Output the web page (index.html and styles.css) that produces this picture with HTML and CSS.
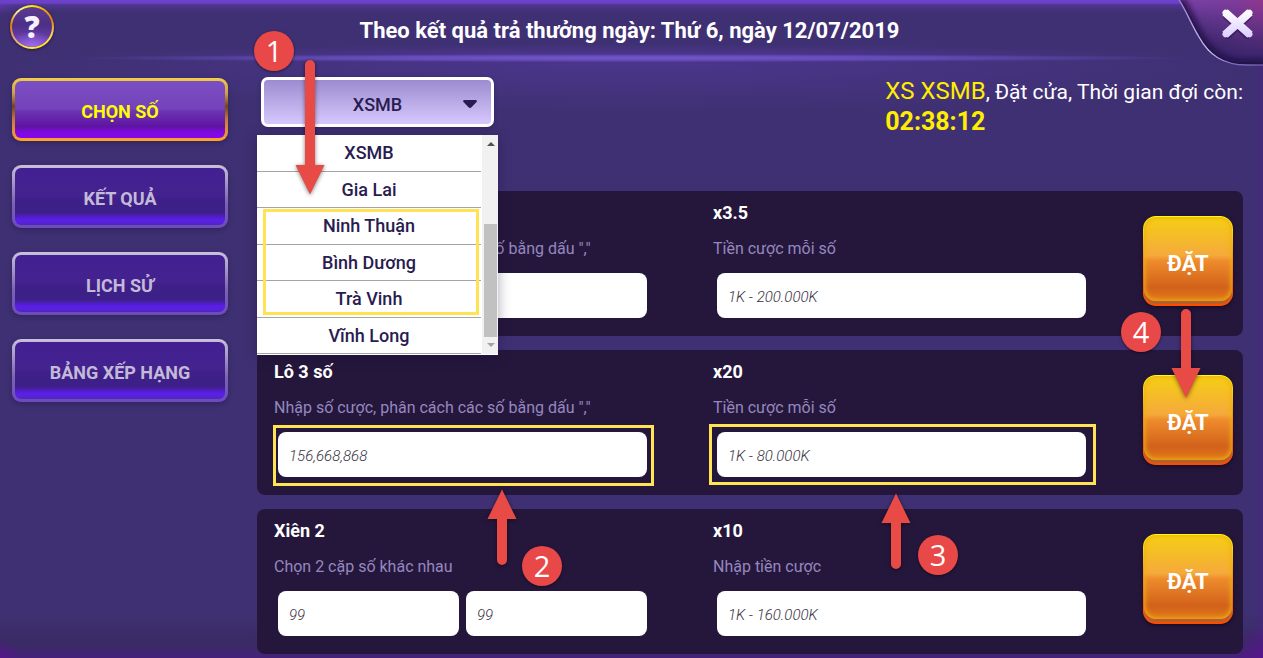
FILE: index.html
```html
<!DOCTYPE html>
<html lang="vi">
<head>
<meta charset="utf-8">
<meta name="viewport" content="width=device-width, initial-scale=1">
<title>XSMB</title>
<link rel="stylesheet" href="styles.css">
</head>
<body>
<div class="shell">
  <header class="header">
    <button class="help" type="button">?</button>
    <h1 class="title">Theo kết quả trả thưởng ngày: Thứ 6, ngày 12/07/2019</h1>
    <button class="close" type="button" aria-label="Đóng">
      <svg viewBox="0 0 86 68" width="86" height="68" aria-hidden="true">
        <defs>
          <linearGradient id="cornerFill" x1="0" y1="0" x2="0" y2="1">
            <stop offset="0" stop-color="#7c3fa4"/><stop offset=".3" stop-color="#5d3489"/><stop offset=".65" stop-color="#43286f"/><stop offset="1" stop-color="#35236b"/>
          </linearGradient>
          <radialGradient id="cornerGlow" cx="86" cy="0" r="60" gradientUnits="userSpaceOnUse">
            <stop offset="0" stop-color="#a02f80" stop-opacity=".6"/><stop offset="1" stop-color="#6a3a92" stop-opacity="0"/>
          </radialGradient>
          <linearGradient id="cornerLine" x1="0" y1="0" x2="1" y2="0">
            <stop offset="0" stop-color="#9d7ad0"/><stop offset=".35" stop-color="#d9c8ff"/><stop offset=".6" stop-color="#8a70c8"/><stop offset="1" stop-color="#6c56a6"/>
          </linearGradient>
          <linearGradient id="crossFill" x1="0" y1="10" x2="0" y2="38" gradientUnits="userSpaceOnUse">
            <stop offset="0" stop-color="#fff"/><stop offset="1" stop-color="#dccbff"/>
          </linearGradient>
          <filter id="inner"><feGaussianBlur stdDeviation="3"/></filter>
          <clipPath id="cornerClip"><path d="M2 0C8 8 14 24 22 37C32 55 46 65 70 65H86V0Z"/></clipPath>
        </defs>
        <g clip-path="url(#cornerClip)">
          <path d="M2 0C8 8 14 24 22 37C32 55 46 65 70 65H86V0Z" fill="url(#cornerFill)"/>
          <path d="M2 0C8 8 14 24 22 37C32 55 46 65 70 65H90V-10Z" fill="url(#cornerGlow)"/>
          <path d="M2 0C8 8 14 24 22 37C32 55 46 65 70 65H90" fill="none" stroke="#1d1040" stroke-width="9" filter="url(#inner)"/>
        </g>
        <path d="M2 0C8 8 14 24 22 37C32 55 46 65 70 65H86" fill="none" stroke="url(#cornerLine)" stroke-width="1.3"/>
        <path d="M50.500 16L70.500 34.500M70.500 16L50.500 34.500" stroke="#201144" stroke-opacity=".5" stroke-width="9" stroke-linecap="round"/>
        <path d="M48.500 12.700L72.500 34.300M72.500 12.700L48.500 34.300" stroke="url(#crossFill)" stroke-width="6" stroke-linecap="round"/>
        <path d="M51 15L70 32M70 15L51 32" stroke="url(#crossFill)" stroke-width="8" stroke-linecap="square"/>
      </svg>
    </button>
  </header>

  <div class="body">
    <nav class="nav">
      <button class="tab tab-active" type="button">CHỌN SỐ</button>
      <button class="tab" type="button">KẾT QUẢ</button>
      <button class="tab" type="button">LỊCH SỬ</button>
      <button class="tab" type="button">BẢNG XẾP HẠNG</button>
    </nav>

    <main class="main">
      <div class="toolbar">
        <div class="picker">
          <select class="select" aria-label="Đài xổ số"><option>XSMB</option></select>
          <svg class="caret" viewBox="0 0 14 8" width="14" height="8" aria-hidden="true"><path d="M1 0H13Q14.500 .5 13.500 2L8.500 7.300Q7 8.500 5.500 7.300L.5 2Q-.5 .5 1 0Z" fill="#291c50"/></svg>
          <div class="menu">
            <ul class="options">
              <li>XSMB</li><li>Gia Lai</li><li>Ninh Thuận</li><li>Bình Dương</li><li>Trà Vinh</li><li>Vĩnh Long</li>
            </ul>
            <div class="scroll">
              <svg viewBox="0 0 8 4" width="8" height="4" aria-hidden="true"><path d="M0 4L4 0L8 4Z" fill="#505050"/></svg>
              <div class="thumb"></div>
              <svg viewBox="0 0 8 4" width="8" height="4" aria-hidden="true"><path d="M0 0L4 4L8 0Z" fill="#a3a3a3"/></svg>
            </div>
            <div class="mark mark-menu"></div>
          </div>
          <svg class="arrow arrow-1" viewBox="0 0 30 135" width="30" height="135" aria-hidden="true"><path d="M10 5A5 5 0 0 1 20 5V105H29.500L15 134.500L.5 105H10Z"/></svg>
          <span class="step step-1">1</span>
        </div>
        <p class="status"><span class="channel">XS XSMB</span>, Đặt cửa, Thời gian đợi còn:<br><strong class="time">02:38:12</strong></p>
      </div>

      <div class="cards">
        <section class="card">
          <div class="bets">
            <div class="bet">
              <h2 class="name">Lô 2 số</h2>
              <label class="hint" for="n1">Nhập số cược, phân cách các số bằng dấu ","</label>
              <div class="fields"><input class="input" id="n1" type="text"></div>
            </div>
            <div class="bet">
              <h2 class="name">x3.5</h2>
              <label class="hint" for="m1">Tiền cược mỗi số</label>
              <div class="fields"><input class="input" id="m1" type="text" placeholder="1K - 200.000K"></div>
            </div>
          </div>
          <div class="action"><button class="place" type="button"><span>ĐẶT</span></button></div>
        </section>

        <section class="card">
          <div class="bets">
            <div class="bet">
              <h2 class="name">Lô 3 số</h2>
              <label class="hint" for="n2">Nhập số cược, phân cách các số bằng dấu ","</label>
              <div class="fields">
                <input class="input" id="n2" type="text" placeholder="156,668,868">
                <div class="mark mark-numbers"></div>
                <svg class="arrow arrow-2" viewBox="0 0 30 77" width="30" height="77" aria-hidden="true"><path d="M15 .5L29.500 30H20V71A5 5 0 0 1 10 71V30H.5Z"/></svg>
                <span class="step step-2">2</span>
              </div>
            </div>
            <div class="bet">
              <h2 class="name">x20</h2>
              <label class="hint" for="m2">Tiền cược mỗi số</label>
              <div class="fields">
                <input class="input" id="m2" type="text" placeholder="1K - 80.000K">
                <div class="mark mark-money"></div>
                <svg class="arrow arrow-3" viewBox="0 0 30 77" width="30" height="77" aria-hidden="true"><path d="M15 .5L29.500 30H20V71A5 5 0 0 1 10 71V30H.5Z"/></svg>
                <span class="step step-3">3</span>
              </div>
            </div>
          </div>
          <div class="action">
            <button class="place" type="button"><span>ĐẶT</span></button>
            <svg class="arrow arrow-4" viewBox="0 0 30 90" width="30" height="90" aria-hidden="true"><path d="M10 5A5 5 0 0 1 20 5V59H29.500L15 89L.5 59H10Z"/></svg>
            <span class="step step-4">4</span>
          </div>
        </section>

        <section class="card">
          <div class="bets">
            <div class="bet">
              <h2 class="name">Xiên 2</h2>
              <label class="hint" for="n3">Chọn 2 cặp số khác nhau</label>
              <div class="fields">
                <input class="input" id="n3" type="text" placeholder="99">
                <input class="input" type="text" placeholder="99" aria-label="Số thứ hai">
              </div>
            </div>
            <div class="bet">
              <h2 class="name">x10</h2>
              <label class="hint" for="m3">Nhập tiền cược</label>
              <div class="fields"><input class="input" id="m3" type="text" placeholder="1K - 160.000K"></div>
            </div>
          </div>
          <div class="action"><button class="place" type="button"><span>ĐẶT</span></button></div>
        </section>
      </div>
    </main>
  </div>
</div>
</body>
</html>
```
FILE: styles.css
```css
* { box-sizing: border-box; }

body {
  margin: 0;
  font-family: Roboto, "Noto Sans", sans-serif;
  color: #fff;
}

button, select, input { font-family: inherit; margin: 0; }
button { cursor: pointer; }

.shell {
  position: relative;
  min-height: 100vh;
  overflow: hidden;
  background:
    linear-gradient(#6e41cc 0, #6a40c6 3px, rgba(90, 58, 165, .6) 5px, rgba(68, 49, 120, 0) 12px),
    radial-gradient(circle at 0 0, rgba(110, 50, 190, .8), rgba(110, 50, 190, 0) 16px),
    radial-gradient(circle at 0 100%, rgba(86, 20, 140, .8), rgba(86, 20, 140, 0) 20px),
    radial-gradient(circle at 100% 100%, rgba(86, 20, 140, .95), rgba(86, 20, 140, 0) 34px),
    linear-gradient(to left, rgba(74, 34, 130, .5), rgba(74, 34, 130, 0) 10px),
    linear-gradient(to top, #46207c 0, #402670 6px, rgba(57, 42, 98, .9) 14px, rgba(63, 48, 115, 0) 46px),
    #3f3073;
}

/* Header */
.header {
  display: flex;
  align-items: center;
  justify-content: center;
  height: 62px;
  background:
    radial-gradient(ellipse 44% 4px at 50% 58px, #7457c8, rgba(104, 78, 190, .85) 55%, rgba(80, 56, 150, 0)),
    radial-gradient(ellipse 46% 16px at 50% 60px, rgba(84, 58, 160, .9), rgba(80, 56, 150, 0));
}

.title {
  margin: 0;
  padding-right: 4px;
  font-size: 22px;
  line-height: 30px;
  font-weight: 700;
}

.help {
  position: absolute;
  top: 5px;
  left: 10px;
  width: 44px;
  height: 44px;
  padding: 0;
  border: 2px solid transparent;
  border-radius: 50%;
  background:
    radial-gradient(ellipse 60% 40% at 50% 100%, #a06cf0, rgba(130, 80, 210, 0)) padding-box,
    linear-gradient(#5a3c8e, #4c2f86 45%, #7446bd) padding-box,
    conic-gradient(#ffe600, #e07a10 70deg, #ffd85a 110deg, #fff000 160deg, #ffee30 195deg, #e8a080 235deg, #e07a00 275deg, #fff8a0 320deg, #ffe600) border-box;
  box-shadow: 0 1px 3px rgba(20, 10, 50, .6);
  color: #f6f0ff;
  font-family: "Open Sans", sans-serif;
  font-size: 30px;
  line-height: 40px;
  font-weight: 800;
}

.close {
  position: absolute;
  top: 0;
  right: 0;
  padding: 0;
  border: 0;
  background: none;
}
.close svg { display: block; }

/* Layout */
.body {
  display: flex;
  gap: 29px;
  padding: 15px 20px 3px 12px;
  background: radial-gradient(ellipse 50% 50px at 50% 0, rgba(88, 60, 165, .5), rgba(63, 48, 115, 0));
}

.nav {
  display: flex;
  flex: none;
  flex-direction: column;
  gap: 24px;
  width: 216px;
  padding-top: 1px;
}

.tab {
  height: 63px;
  padding: 5px 0 0;
  border: 3px solid transparent;
  border-radius: 9px;
  background:
    linear-gradient(#432092, #44228f 48%, #3f2089 54%, #3d1f88 78%, #5a1fe6 90%, #5a20e6 95%, #4d2aa8) padding-box,
    linear-gradient(#c9c1dc, #7a64b0 60%, #6b4bbc) border-box;
  box-shadow: 0 2px 5px rgba(25, 15, 60, .35);
  color: #c3bad8;
  font-size: 18px;
  line-height: 24px;
  font-weight: 700;
}

.tab-active {
  background:
    linear-gradient(#7a4fc4, #7542ba 49%, #6c33b0 53%, #5f14a4 80%, #8009e0 90%, #8208e8) padding-box,
    linear-gradient(#f0d048, #d09a48 25%, #70441f 45%, #c47a38 65%, #ffa52c) border-box;
  color: #ff0;
}

.main { flex: 1; min-width: 0; }

.toolbar {
  display: flex;
  align-items: flex-start;
  justify-content: space-between;
  min-height: 114px;
  padding-left: 4px;
}

.picker { position: relative; z-index: 2; }

.select {
  display: block;
  width: 233px;
  height: 50px;
  padding: 4px 0 0;
  border: 3px solid #fff;
  border-radius: 7px;
  appearance: none;
  background: linear-gradient(#9d8bd0, #d6c8fd);
  box-shadow: 0 1px 4px rgba(30, 20, 70, .4);
  color: #291c50;
  font-size: 18px;
  font-weight: 500;
  text-align: center;
  text-align-last: center;
}

.caret { position: absolute; top: 23px; right: 17px; }

.menu {
  position: absolute;
  top: 58px;
  left: -4px;
  display: flex;
  width: 241px;
  height: 220px;
  background: #fff;
  box-shadow: 0 2px 12px rgba(20, 10, 50, .35);
  color: #291c50;
}

.options {
  display: grid;
  flex: 1;
  grid-template-rows: repeat(6, minmax(0, 1fr));
  margin: 0;
  padding: 0 0 1px;
  list-style: none;
  font-size: 18px;
  line-height: 36px;
  font-weight: 500;
  text-align: center;
}
.options li { border-bottom: 1px solid #a5a5a5; }

.scroll {
  display: flex;
  flex-direction: column;
  align-items: center;
  justify-content: space-between;
  width: 17px;
  margin-bottom: 1px;
  padding: 7px 1px 7px 2px;
  border-left: 1px solid #fff;
  background: #f1f1f1;
}

.thumb { width: 13px; height: 113px; margin-top: 72px; background: #c1c1c1; }

.status {
  margin: 0;
  font-size: 21px;
  line-height: 29px;
}
.channel { color: #fe0; font-size: 24px; }
.time { color: #fe0; font-size: 25px; }

/* Bet cards */
.cards { display: flex; flex-direction: column; gap: 14px; }

.card {
  display: flex;
  align-items: center;
  gap: 57px;
  padding: 12px 10px 18px 17px;
  border-radius: 8px;
  background: #25173c;
}

.bets {
  display: grid;
  flex: 1;
  grid-template-columns: 1fr 1fr;
  gap: 66px;
}

.name {
  margin: 0 0 16px;
  font-size: 18px;
  line-height: 20px;
  font-weight: 700;
}

.hint {
  display: block;
  margin-bottom: 14px;
  color: #9587bf;
  font-size: 16px;
  line-height: 20px;
}

.fields {
  position: relative;
  display: flex;
  gap: 7px;
  margin-left: 4px;
}

.input {
  flex: 1;
  width: 0;
  min-width: 0;
  height: 45px;
  padding: 2px 11px 0;
  border: 0;
  border-radius: 8px;
  background: #fff;
  color: #37323f;
  font-size: 15px;
  font-style: italic;
  font-weight: 300;
}
.input::placeholder { color: #37323f; opacity: 1; }

.action { position: relative; flex: none; }

.place {
  position: relative;
  display: block;
  width: 90px;
  height: 90px;
  padding: 6px 0 0;
  border: 0;
  border-radius: 13px;
  background: linear-gradient(#ff0, #f0a010 40%, #f2650a 80%, #ff4a00);
  box-shadow: 0 2px 4px rgba(10, 0, 20, .5);
  color: #fff;
  font-size: 22px;
  line-height: 30px;
  font-weight: 700;
}
.place::before {
  content: "";
  position: absolute;
  inset: 1px 1px 5px;
  border-radius: 12px;
  background: linear-gradient(#f5cf14, #f5a93c 46%, #ee8c2c 52%, #d2611a 84%, #e07a1a);
  box-shadow: inset 0 0 5px 1px #f0b010, 0 3px 0 #b4602c;
}
.place span { position: relative; }

/* Guide annotations */
.mark { position: absolute; border: 3px solid #ffe352; }
.mark-menu { top: 74px; left: 6px; width: 216px; height: 106px; }
.mark-numbers { inset: -7px -7px -9px -5px; }
.mark-money { inset: -8px -10px -8px -8px; }

.arrow {
  position: absolute;
  overflow: visible;
  fill: #e84a45;
  filter: drop-shadow(0 1px 2px rgba(0, 0, 0, .5));
}
.arrow-1 { top: -17px; left: 34px; }
.arrow-2 { top: 57px; left: 209px; }
.arrow-3 { top: 61px; left: 164px; }
.arrow-4 { top: -66px; left: 28px; }

.step {
  position: absolute;
  width: 40px;
  height: 40px;
  border-radius: 50%;
  background: #e94848;
  box-shadow: 0 1px 3px rgba(0, 0, 0, .5);
  font-family: "Open Sans", sans-serif;
  font-size: 29px;
  line-height: 39px;
  text-align: center;
}
.step-1 { top: -46px; left: -7px; }
.step-2 { top: 114px; left: 244px; }
.step-3 { top: 103px; left: 201px; }
.step-4 { top: -63px; left: -22px; }
```
